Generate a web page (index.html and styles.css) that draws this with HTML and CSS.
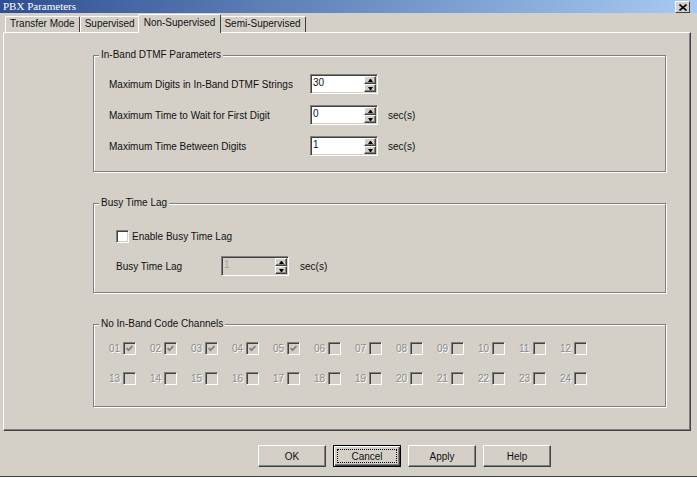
FILE: index.html
```html
<!DOCTYPE html>
<html lang="en">
<head>
<meta charset="UTF-8">
<meta name="viewport" content="width=device-width, initial-scale=1.0">
<title>PBX Parameters</title>
<link rel="stylesheet" href="styles.css">
</head>
<body>
<div class="dialog">
   <div class="titlebar">
      <span class="title">PBX Parameters</span>
      <span class="close-btn">
         <svg width="8" height="7" viewBox="0 0 8 7"><path d="M0.5 0.5L7.5 6.5M7.5 0.5L0.5 6.5" stroke="#000" stroke-width="1.6" fill="none"/></svg>
      </span>
   </div>

   <div class="tabs">
      <div class="tab">Transfer Mode</div>
      <div class="tab">Supervised</div>
      <div class="tab active">Non-Supervised</div>
      <div class="tab">Semi-Supervised</div>
   </div>

   <div class="pane">
      <!-- in-band dtmf -->
      <div class="group group-dtmf">
         <div class="group-title">In-Band DTMF Parameters</div>
         <div class="group-body rows">
            <div class="row">
               <span class="label">Maximum Digits in In-Band DTMF Strings</span>
               <div class="spin"><span class="spin-value">30</span><span class="spin-btns"><span class="spin-up"></span><span class="spin-down"></span></span></div>
            </div>
            <div class="row">
               <span class="label">Maximum Time to Wait for First Digit</span>
               <div class="spin"><span class="spin-value">0</span><span class="spin-btns"><span class="spin-up"></span><span class="spin-down"></span></span></div>
               <span class="unit">sec(s)</span>
            </div>
            <div class="row">
               <span class="label">Maximum Time Between Digits</span>
               <div class="spin"><span class="spin-value">1</span><span class="spin-btns"><span class="spin-up"></span><span class="spin-down"></span></span></div>
               <span class="unit">sec(s)</span>
            </div>
         </div>
      </div>

      <!-- busy time lag -->
      <div class="group group-busy">
         <div class="group-title">Busy Time Lag</div>
         <div class="group-body">
            <label class="check-row"><span class="checkbox"></span>Enable Busy Time Lag</label>
            <div class="row">
               <span class="label">Busy Time Lag</span>
               <div class="spin disabled"><span class="spin-value">1</span><span class="spin-btns"><span class="spin-up"></span><span class="spin-down"></span></span></div>
               <span class="unit">sec(s)</span>
            </div>
         </div>
      </div>

      <!-- channels -->
      <div class="group group-chan">
         <div class="group-title">No In-Band Code Channels</div>
         <div class="group-body channels">
            <div class="chan"><span class="chan-num">01</span><span class="checkbox disabled checked"><svg width="7" height="7" viewBox="0 0 7 7"><path d="M0.5 3L2.5 5.2L6.5 1" stroke="#808080" stroke-width="1.8" fill="none"/></svg></span></div>
            <div class="chan"><span class="chan-num">02</span><span class="checkbox disabled checked"><svg width="7" height="7" viewBox="0 0 7 7"><path d="M0.5 3L2.5 5.2L6.5 1" stroke="#808080" stroke-width="1.8" fill="none"/></svg></span></div>
            <div class="chan"><span class="chan-num">03</span><span class="checkbox disabled checked"><svg width="7" height="7" viewBox="0 0 7 7"><path d="M0.5 3L2.5 5.2L6.5 1" stroke="#808080" stroke-width="1.8" fill="none"/></svg></span></div>
            <div class="chan"><span class="chan-num">04</span><span class="checkbox disabled checked"><svg width="7" height="7" viewBox="0 0 7 7"><path d="M0.5 3L2.5 5.2L6.5 1" stroke="#808080" stroke-width="1.8" fill="none"/></svg></span></div>
            <div class="chan"><span class="chan-num">05</span><span class="checkbox disabled checked"><svg width="7" height="7" viewBox="0 0 7 7"><path d="M0.5 3L2.5 5.2L6.5 1" stroke="#808080" stroke-width="1.8" fill="none"/></svg></span></div>
            <div class="chan"><span class="chan-num">06</span><span class="checkbox disabled"></span></div>
            <div class="chan"><span class="chan-num">07</span><span class="checkbox disabled"></span></div>
            <div class="chan"><span class="chan-num">08</span><span class="checkbox disabled"></span></div>
            <div class="chan"><span class="chan-num">09</span><span class="checkbox disabled"></span></div>
            <div class="chan"><span class="chan-num">10</span><span class="checkbox disabled"></span></div>
            <div class="chan"><span class="chan-num">11</span><span class="checkbox disabled"></span></div>
            <div class="chan"><span class="chan-num">12</span><span class="checkbox disabled"></span></div>
            <div class="chan"><span class="chan-num">13</span><span class="checkbox disabled"></span></div>
            <div class="chan"><span class="chan-num">14</span><span class="checkbox disabled"></span></div>
            <div class="chan"><span class="chan-num">15</span><span class="checkbox disabled"></span></div>
            <div class="chan"><span class="chan-num">16</span><span class="checkbox disabled"></span></div>
            <div class="chan"><span class="chan-num">17</span><span class="checkbox disabled"></span></div>
            <div class="chan"><span class="chan-num">18</span><span class="checkbox disabled"></span></div>
            <div class="chan"><span class="chan-num">19</span><span class="checkbox disabled"></span></div>
            <div class="chan"><span class="chan-num">20</span><span class="checkbox disabled"></span></div>
            <div class="chan"><span class="chan-num">21</span><span class="checkbox disabled"></span></div>
            <div class="chan"><span class="chan-num">22</span><span class="checkbox disabled"></span></div>
            <div class="chan"><span class="chan-num">23</span><span class="checkbox disabled"></span></div>
            <div class="chan"><span class="chan-num">24</span><span class="checkbox disabled"></span></div>
         </div>
      </div>
   </div>

   <div class="footer">
      <button class="btn">OK</button>
      <button class="btn focused"><span class="focus-rect">Cancel</span></button>
      <button class="btn">Apply</button>
      <button class="btn">Help</button>
   </div>
</div>
</body>
</html>
```

FILE: styles.css
```css
* {
    box-sizing: border-box;
}
body {
    margin: 0;
    background: #fff;
    font-family: "Liberation Sans", Arial, sans-serif;
    font-size: 10px;
    color: #111;
}
.dialog {
    width: 697px;
    height: 477px;
    background: #d4d0c8;
    border-bottom: 1px solid #404040;
}
/* title bar */
.titlebar {
    height: 13px;
    display: flex;
    align-items: center;
    justify-content: space-between;
    padding: 0 7px 0 3px;
    background: linear-gradient(to right, #2f4f92, #a8caf2);
}
.title {
    font-family: "Liberation Serif", "Times New Roman", serif;
    font-size: 11px;
    line-height: 13px;
    color: #fff;
}
.close-btn {
    width: 15px;
    height: 12px;
    margin-top: 1px;
    display: flex;
    align-items: center;
    justify-content: center;
    background: #d4d0c8;
    border: 1px solid;
    border-color: #fff #404040 #404040 #fff;
}
/* tabs */
.tabs {
    height: 19px;
    display: flex;
    align-items: flex-end;
    padding-left: 5px;
}
.tab {
    height: 16px;
    padding: 0 4px;
    line-height: 13px;
    border-top: 1px solid #fff;
    border-left: 1px solid #fff;
    border-right: 1px solid #404040;
    border-radius: 2px 2px 0 0;
}
.tab.active {
    height: 19px;
    margin: 0 -2px -1px;
    padding: 0 5px;
    line-height: 15px;
    position: relative;
    z-index: 1;
    background: #d4d0c8;
}
/* pane */
.pane {
    margin-left: 3px;
    width: 688px;
    height: 399px;
    padding-top: 22px;
    border: 1px solid;
    border-color: #fff #404040 #404040 #fff;
    box-shadow: inset -1px -1px #808080;
}
.group {
    margin-left: 89px;
    width: 573px;
    border: 1px solid #808080;
    box-shadow: inset 1px 1px #fff, 1px 1px #fff;
}
.group + .group {
    margin-top: 31px;
}
.group-title {
    width: fit-content;
    margin: -7px 0 0 5px;
    padding: 0 2px;
    line-height: 12px;
    background: #d4d0c8;
}
.group-body {
    padding-left: 15px;
}
.group-dtmf {
    padding-bottom: 15px;
}
.group-busy {
    padding-bottom: 16px;
}
.group-busy .group-body {
    padding-left: 22px;
}
.group-chan {
    padding-bottom: 21px;
}
.rows {
    margin-top: 13px;
    display: flex;
    flex-direction: column;
    gap: 11px;
}
.row {
    height: 20px;
    display: flex;
    align-items: center;
}
.group-dtmf .label {
    width: 201px;
}
.group-busy .label {
    width: 105px;
}
.unit {
    margin-left: 10px;
}
.group-busy .unit {
    margin-left: 11px;
}
/* spin box */
.spin {
    width: 68px;
    height: 20px;
    display: flex;
    padding: 1px;
    background: #fff;
    border: 1px solid;
    border-color: #808080 #fff #fff #808080;
    box-shadow: inset 1px 1px #404040, inset -1px -1px #d4d0c8;
}
.spin-value {
    flex: 1;
    padding: 1px 0 0 1px;
    line-height: 12px;
}
.spin.disabled {
    background: #d4d0c8;
}
.spin.disabled .spin-value {
    color: #a0a0a0;
}
.spin-btns {
    width: 12px;
    display: flex;
    flex-direction: column;
}
.spin-up,
.spin-down {
    height: 8px;
    display: flex;
    align-items: center;
    justify-content: center;
    background: #d4d0c8;
    border: 1px solid;
    border-color: #fff #404040 #404040 #fff;
    box-shadow: inset -1px -1px #808080;
}
.spin-up::before,
.spin-down::before {
    content: "";
    width: 1px;
    border-left: 2px solid transparent;
    border-right: 2px solid transparent;
}
.spin-up::before {
    border-bottom: 3px solid #000;
}
.spin-down::before {
    border-top: 3px solid #000;
}
/* checkboxes */
.check-row {
    margin-top: 21px;
    margin-bottom: 13px;
    height: 13px;
    display: flex;
    align-items: center;
    gap: 3px;
}
.checkbox {
    width: 13px;
    height: 13px;
    display: flex;
    align-items: center;
    justify-content: center;
    background: #fff;
    border: 1px solid;
    border-color: #808080 #fff #fff #808080;
    box-shadow: inset 1px 1px #404040, inset -1px -1px #d4d0c8;
}
.checkbox.disabled {
    background: #d4d0c8;
}
.channels {
    margin-top: 12px;
    display: grid;
    grid-template-columns: repeat(12, 41px);
    row-gap: 17px;
}
.chan {
    height: 13px;
    display: flex;
    align-items: center;
}
.chan-num {
    width: 14px;
    color: #8c8c8c;
    text-shadow: 1px 1px #fff;
}
/* footer buttons */
.footer {
    height: 45px;
    display: flex;
    gap: 7px;
    padding: 14px 0 0 258px;
}
.btn {
    width: 68px;
    height: 22px;
    display: flex;
    align-items: center;
    justify-content: center;
    padding: 0;
    font: inherit;
    color: #111;
    background: #d4d0c8;
    border: 1px solid;
    border-color: #fff #404040 #404040 #fff;
    box-shadow: inset -1px -1px #808080;
}
.btn.focused {
    border-color: #000;
    box-shadow: inset 1px 1px #fff, inset -1px -1px #404040, inset -2px -2px #808080;
}
.focus-rect {
    width: 60px;
    height: 14px;
    display: flex;
    align-items: center;
    justify-content: center;
    border: 1px dotted #000;
}
```
